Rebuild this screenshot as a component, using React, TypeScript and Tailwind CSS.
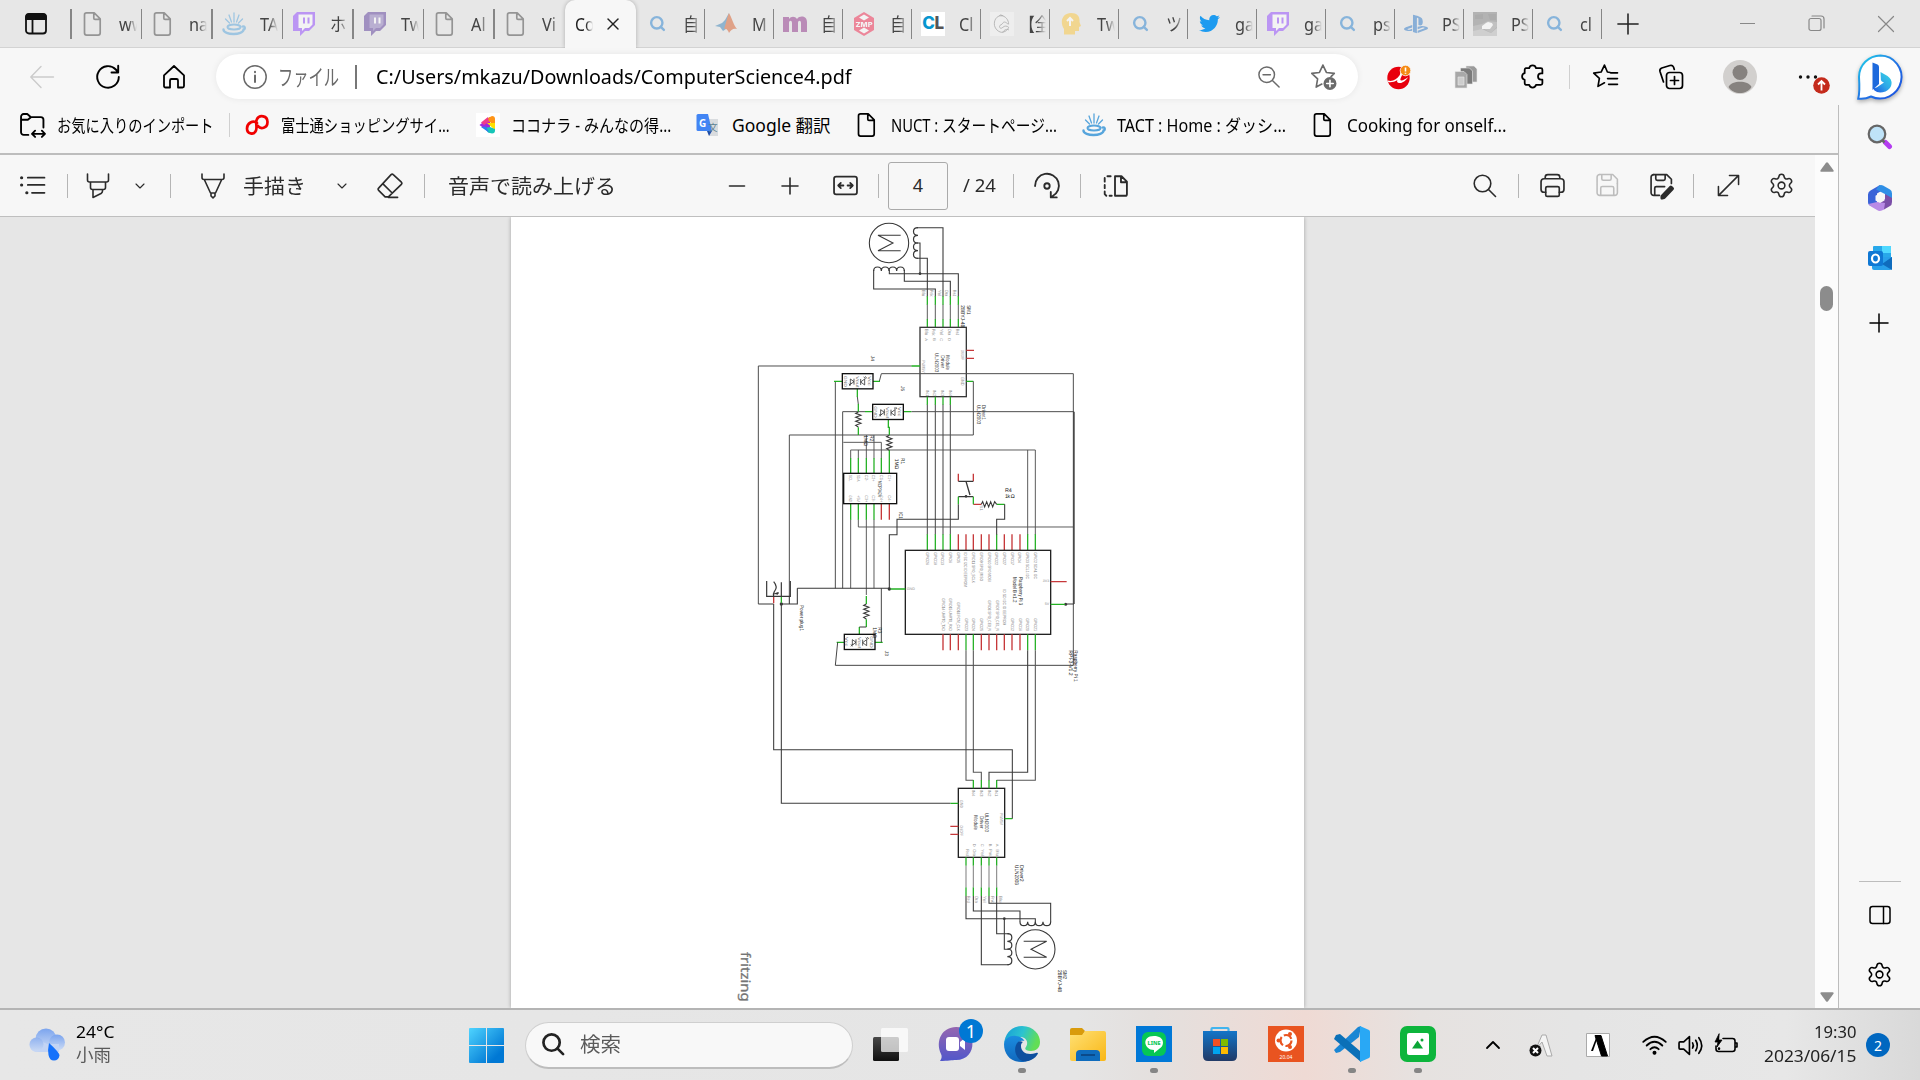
import React, { useLayoutEffect, useRef, useState } from "react";
import { Search, Settings, X, ChevronDown, ChevronUp } from "lucide-react";
import { FaTwitter, FaPlaystation } from "react-icons/fa";

const FONT = "font-['Noto_Sans','Noto_Sans_CJK_JP',sans-serif]";

/* Text squeezed or stretched to a given width. */
function Fit({ w, className = "", children }: { w: number; className?: string; children: string }) {
  const ref = useRef<HTMLSpanElement>(null);
  const [s, setS] = useState(1);
  useLayoutEffect(() => {
    const measure = () => {
      if (ref.current && ref.current.offsetWidth) setS(w / ref.current.offsetWidth);
    };
    measure();
    document.fonts?.ready.then(measure);
  }, [w]);
  return (
    <span className={`block shrink-0 whitespace-nowrap ${className}`} style={{ width: w }}>
      <span ref={ref} className="inline-block origin-left" style={{ transform: `scaleX(${s})` }}>
        {children}
      </span>
    </span>
  );
}

type P = { className?: string; children?: React.ReactNode; vb?: string; sw?: number };
const Ico = ({ className = "", children, vb = "0 0 24 24", sw = 1.5 }: P) => (
  <svg viewBox={vb} className={`block shrink-0 overflow-visible ${className}`} fill="none" stroke="currentColor" strokeWidth={sw} strokeLinecap="round" strokeLinejoin="round">
    {children}
  </svg>
);

const Doc = ({ className = "size-6" }: P) => (
  <Ico className={className} sw={1.7}>
    <path d="M5.500 .9h7.700l6 6v14.200a2 2 0 0 1-2 2H5.500a2 2 0 0 1-2-2V2.900a2 2 0 0 1 2-2zM12.800 1v5.200a1.200 1.200 0 0 0 1.200 1.200h5" />
  </Ico>
);
const Java = ({ className = "size-6" }: P) => (
  <Ico className={className} sw={1.3}>
    <g stroke="#57a5dc">
      <path d="M12 10V1M9.500 10L7 3M14.500 10L17 3M7.500 11L3.500 7M16.500 11L20.500 7" />
      <ellipse cx="12" cy="15" rx="6.500" ry="2.500" strokeWidth="2" />
      <path d="M1.500 17.500c0 6 20 6 20 0c2 0 1.500-4-1-3" strokeWidth="2.400" />
    </g>
  </Ico>
);
const Twitch = ({ c }: { c: string }) => (
  <svg viewBox="0 0 24 24" className="size-6">
    <path d="M5 0h18v13l-6 6h-4l-5 5v-5H1V4z" fill={c} />
    <path d="M6.500 2.500h14v10l-3.500 3.500h-4l-3 3v-3h-3.500z" fill={c === "#5b3b9b" ? "#8d78bd" : "#fff"} />
    <path d="M11 5.500h2v6h-2zM15.500 5.500h2v6h-2z" fill={c === "#5b3b9b" ? "#fff" : c} />
  </svg>
);
const Lens = () => <Search className="size-[17px] text-[#2a83d0]" strokeWidth={3.4} />;

const favicon: Record<string, React.ReactNode> = {
  doc: <Doc className="size-6 text-[#444]" />,
  java: <Java />,
  twitch: <Twitch c="#9146ff" />,
  twitch2: <Twitch c="#5b3b9b" />,
  search: <Lens />,
  matlab: (
    <svg viewBox="0 0 24 24" className="size-6">
      <path d="M1 14l7-3 3-3 4-7v14l-6 4-3-4z" fill="#3a83b8" />
      <path d="M15 1c2 3 5 13 8 16-4-1-6 1-8 4-1-3-3-5-5-4 2-5 3-12 5-16z" fill="#d95d2a" />
    </svg>
  ),
  moodle: (
    <svg viewBox="0 0 24 24" className="size-6">
      <path d="M0 5h6v2c2-3 6-3 8 0 3-4 10-3 10 3v10h-6V11c0-3-3-3-3 0v9H9v-9c0-3-3-3-3 0v9H0z" fill="#8e3289" />
    </svg>
  ),
  zmp: (
    <svg viewBox="0 0 24 24" className="size-6">
      <path d="M12 0l10 6v12l-10 6-10-6V6z" fill="#f1284e" />
      <path d="M12 2.500l5 3-5 3-5-3zM12 21.500l5-3-5-3-5 3z" fill="#fff" />
      <text x="3.500" y="14.500" fontSize="6.500" fontWeight="800" fill="#fff" fontFamily="Inter" textLength="17" lengthAdjust="spacingAndGlyphs">ZMP</text>
    </svg>
  ),
  cl: (
    <span className="flex size-6 items-center justify-center bg-white font-['Inter',sans-serif] text-[17px] font-extrabold tracking-tight text-[#0796cf]">
      C<span className="text-[#555]">L</span>
    </span>
  ),
  bird: (
    <span className="flex size-6 items-center justify-center bg-[#f6f6f6]">
      <Ico className="size-5 text-[#777]" sw={1}>
        <path d="M11 2c5 0 9 5 9 10M11 2C5 2 2 8 3 14c1 4 4 7 8 8 5 0 8-3 9-6-2-2-5-2-7 0s-4 1-4-1 3-2 4-4 3-2 6 1M9 2l1-1 3 1M13 22c2-4 5-4 7-3" />
      </Ico>
    </span>
  ),
  bulb: (
    <svg viewBox="0 0 24 24" className="size-6">
      <path d="M5 22v-5C0 9 4 1 12 1c7 0 9 4 8.500 9l1.500 4-2 1v4h-4v3.500H5z" fill="#fcc63c" />
      <path d="M11 14V6M8 9l3-3 3 3" stroke="#fff" strokeWidth="2" fill="none" />
    </svg>
  ),
  twitter: <FaTwitter className="size-[21px] text-[#1d9bf0]" />,
  ps: <FaPlaystation className="size-6 text-[#2d78c8]" />,
  pic: (
    <svg viewBox="0 0 24 24" className="size-6">
      <path d="M0 0h24v24H0z" fill="#808080" />
      <path d="M0 14l9-2 6-3 9 1v5l-6 6-7-4-11 5z" fill="#9c9c9c" />
      <path d="M0 19l9-2 9 4 6-5v8H0z" fill="#b8b8b8" />
      <path d="M2 3l8-1v5H2zM15 2h8v6h-6z" fill="#727272" />
      <path d="M9 14l4-3 2-1 4 1 1 2-3 4H9z" fill="#fff" />
    </svg>
  ),
};

const before: [string, string][] = [["doc", "ww"], ["doc", "na"], ["java", "TA"], ["twitch", "ホ"], ["twitch2", "Tw"], ["doc", "Al"], ["doc", "Vi"]];
const after: [string, string][] = [
  ["search", "自"], ["matlab", "M"], ["moodle", "自"], ["zmp", "自"], ["cl", "Cl"], ["bird", "【全"], ["bulb", "Tw"],
  ["search", "ツ"], ["twitter", "ga"], ["twitch", "ga"], ["search", "ps"], ["ps", "PS"], ["pic", "PS"], ["search", "cl"],
];

function Tab({ icon, text, sep = true, w }: { icon: string; text: string; sep?: boolean; w: string }) {
  const vivid = icon === "cl" || icon === "twitter";
  const bracket = text.startsWith("【");
  return (
    <div className={`flex h-[47px] shrink-0 items-center ${w}`}>
      <div className={`ml-[9px] flex w-6 shrink-0 items-center justify-center ${vivid ? "" : "opacity-50"}`}>{favicon[icon]}</div>
      <div className="ml-[14px] w-[18px] shrink-0 whitespace-nowrap [mask-image:linear-gradient(90deg,#000_50%,transparent)]">
        <span className={`inline-block origin-left text-[18.500px] text-[#444] ${bracket ? "-ml-[8px] scale-x-[.8]" : "scale-x-[.88]"}`}>{text}</span>
      </div>
      <div className={`ml-auto h-[30px] w-[1.500px] ${sep ? "bg-[#868686]" : ""}`} />
    </div>
  );
}

const Gear = ({ className = "size-[27px]" }: P) => <Settings className={className} strokeWidth={1.4} />;

/* ---------- schematic ---------- */
const K = "#383838", G = "#22b022", R = "#c6383a", N = "#858585";
const Ln = ({ d, c = K, w = 3.2 }: { d: string; c?: string; w?: number }) => <path d={d} stroke={c} strokeWidth={w} />;
const pins = (xs: number[], a: number, b: number) => xs.map((x) => `M${x} ${a}V${b}`).join("");
const T = ({ x, y, s = 15, l, c = "#8f8f8f", children }: { x: number; y: number; s?: number; l?: number; c?: string; children: string }) => (
  <text transform={`translate(${x} ${y}) rotate(90)`} fontSize={s + 1} fill={c} textLength={l} lengthAdjust="spacingAndGlyphs">
    {children}
  </text>
);
const resV = (x: number, y: number) => `M${x} ${y}l-8 4l16 6l-16 6l16 6l-16 6l16 6l-16 6l8 5`;
const Sensor = ({ x, y, flip = false }: { x: number; y: number; flip?: boolean }) => (
  <g transform={`translate(${x} ${y})`}>
    <rect width="92" height="45.500" stroke="#111" strokeWidth="4" />
    <T x={flip ? 76 : 4} y={6} s={12} l={34} c="#777">GND</T>
    <T x={flip ? 3 : 76} y={8} s={12} l={28} c="#777">Vcc</T>
    <T x={40} y={8} s={12} l={34} c="#777">Vout</T>
    <path d="M35 15v18M35 24L24 16v16zM20 36l7-7M20 30l4 6M55 16v18M55 25l12-9v18zM64 10l6 5M69 8l4 6" stroke="#333" strokeWidth="2.400" />
  </g>
);

function Schematic() {
  return (
    <svg viewBox="511 217 793 791" className="h-[791px] w-[793px]" fill="none" fontFamily="'Liberation Sans', sans-serif" textRendering="geometricPrecision">
      <g transform="translate(740 215) scale(.33333)">
        {/* upper motor */}
        <circle cx="447" cy="84" r="59" stroke={K} strokeWidth="3.200" />
        <Ln d="M482 61H414L459 84L414 107H482" />
        <Ln d="M534 38c-18 0-18 23 0 23c-18 0-18 23 0 23c-18 0-18 23 0 23c-18 0-18 23 0 23" w={3.6} />
        <Ln d="M401 168c0-16 23-16 23 0c0-16 23-16 23 0c0-16 23-16 23 0c0-16 23-16 23 0" w={3.6} />
        <Ln d="M530 38H609V245M532 130H562V245M530 84H540V176M448 165V176H655V245M493 165V199H631V245M401 165V222H586V245" />
        <circle cx="540" cy="176" r="4" fill={K} />
        <Ln d={pins([562, 586, 609, 631, 655], 268, 313)} c="#666" />
        <Ln d={pins([562, 586, 609, 631, 655], 244, 269) + pins([562, 586, 609, 631, 655], 312, 336)} c={G} w={3.8} />
        {["Blu", "Pnk", "Yel", "Ora", "Red"].map((t, i) => (
          <g key={t}>
            <T x={546 + i * 23.5} y={224} s={13} l={20}>{t}</T>
            <T x={554 + i * 23.5} y={341} s={13} l={20}>{t}</T>
            {i < 4 && <T x={555 + i * 23} y={370} s={11}>{"ABCD"[i]}</T>}
          </g>
        ))}
        <T x={680} y={271} l={27} c="#222">SM1</T>
        <T x={664} y={271} l={66} c="#222">28BYJ-48</T>
        <rect x="540" y="337" width="139" height="208" stroke={K} strokeWidth="4" />
        <T x={619} y={421} l={44} c="#333">Module</T>
        <T x={603} y={421} l={38} c="#333">Driver</T>
        <T x={586} y={414} l={58} c="#333">ULN2003</T>
        <T x={545} y={436} s={12} l={36}>PWM5V</T>
        <T x={663} y={404} s={12} l={32}>ON/OFF</T>
        <T x={663} y={486} s={13} l={26}>GND</T>
        {[0, 1, 2, 3].map((i) => <T key={i} x={557 + i * 23} y={524} s={12}>{`IN${i + 1}`}</T>)}
        <Ln d="M679 406H702M679 430H702" c={R} w={4} />
        <Ln d="M514 453H540M679 499H700" c={G} w={3.8} />
        <T x={392} y={422} s={14} c="#444">J4</T>
        <T x={484} y={513} s={14} c="#444">J5</T>

        <g transform="translate(0 435)">
          <Ln d="M514 18H55V732M418 64L424 41H1000V916M352 110L355 133M700 64V225H148V710M286 64V685M375 155H308V685M514 155H1002" c="#4c4c4c" w={3} />
          <Ln d="M1002 155V732" w={4} />
          <Ln d={"M310 247H424V295M402 225V295M379 225V295M332 295V270H886V525M355 270V295M863 270V525M332 478V685M355 478V501H1000M379 478V705M402 478V685"} c="#505050" w={2.8} />
          <Ln d={pins([562, 586, 609, 631], 133, 524)} c="#505050" />
          <Ln d={pins([562, 586, 609, 631], 110, 134) + pins([562, 586, 609, 631, 770, 863, 886], 523, 571) + "M282 64H307M399 64H420M352 86V111M355 132V155M355 202V225M375 155H398M491 155H514M445 179V202H448V225M448 270V340" + pins([332, 355, 379, 402, 424], 294, 340) + pins([332, 355, 379, 402], 431, 479)} c={G} w={3.8} />
          <Ln d={pins([424, 448], 431, 479) + pins([655, 678, 700, 724, 747, 793, 816, 840], 523, 571) + "M655 341V364M700 341V364M700 433H724"} c={R} w={4} />
          <Sensor x={307} y={41} />
          <Sensor x={398} y={133} />
          <Ln d={resV(355, 156) + resV(448, 226)} />
          <rect x="311" y="340" width="159" height="91" stroke="#111" strokeWidth="4" />
          <T x={413} y={362} s={15} l={48} c="#333">MCP3424</T>
          {["SCL", "SDA", "C2-", "C2+", "C1-", "C1+"].map((t, i) => <T key={t} x={328 + i * 23} y={344} s={12} l={20}>{t}</T>)}
          {["GND", "+5V", "C3+", "C3-", "C4+", "C4-"].map((t, i) => <T key={t} x={328 + i * 23} y={406} s={12} l={20}>{t}</T>)}
          <T x={391} y={226} l={18} c="#222">R2</T>
          <T x={373} y={226} l={32} c="#222">1MΩ</T>
          <T x={483} y={294} l={18} c="#222">R1</T>
          <T x={466} y={296} l={32} c="#222">1MΩ</T>
          <T x={478} y={456} l={20} c="#333">IC1</T>
          <T x={727} y={135} l={44} c="#333">Driver1</T>
          <T x={710} y={135} l={58} c="#222">ULN2003</T>
          <Ln d="M655 364H700M678 364L690 405M655 410H700" w={4} />
          <Ln d="M655 410V433M700 410V433M770 433H794" c={G} w={3.8} />
          <circle cx="678" cy="409" r="4" fill={K} />
          <Ln d="M724 433l4-8l6 16l6-16l6 16l6-16l6 16l6-16l6 8" />
          <Ln d="M794 433V478H770V524M655 433V478H471V524H448V685" />
          <T x={721} y={436} s={12}>S1</T>
          <text x="795" y="397" fontSize="16" fill="#222">R4</text>
          <text x="795" y="413" fontSize="16" fill="#222" textLength="29">1k Ω</text>
        </g>

        <g transform="translate(0 945)">
          <rect x="496" y="61" width="436" height="252" stroke="#222" strokeWidth="4" />
          {["GPIO26", "GPIO19", "GPIO13", "GPIO6", "GPIO5", "ID SC I2C ID EEPROM", "GPIO11 SPI0_SCLK", "GPIO9 SPI0_MISO", "GPIO10 SPI0 MOSI", "GPIO22", "GPIO27", "GPIO17", "GPIO4", "GPIO3 SCL1 I2C", "GPIO2 SDA1 I2C"].map((t, i) => (
            <T key={t} x={558 + i * 23.1} y={67} s={12} l={[38, 38, 38, 32, 32, 104, 92, 86, 88, 38, 38, 38, 32, 80, 80][i]} c="#7c7c7c">{t}</T>
          ))}
          {([["GPIO14 UART0_TXD", 98], ["GPIO15 UART0_RXD", 98], ["GPIO18 PCM_CLK", 86], ["GPIO23", 38], ["GPIO24", 38], ["GPIO25", 38], ["GPIO8 SPI0_CE0_N", 92], ["GPIO7 SPI0_CE1_N", 92], ["", 0], ["GPIO12", 38], ["GPIO16", 38], ["GPIO20", 38], ["GPIO21", 38]] as [string, number][]).map(([t, l], i) =>
            t ? <T key={i} x={605 + i * 23.1} y={303 - l} s={12} l={l} c="#7c7c7c">{t}</T> : <T key={i} x={790} y={178} s={12} l={108} c="#7c7c7c">ID SD I2C ID EEPROM</T>
          )}
          <T x={838} y={141} l={84} c="#222">Raspberry Pi 3</T>
          <T x={818} y={141} l={76} c="#222">Model B v1.2</T>
          <text x="500" y="181" fontSize="11" fill="#888">GND</text>
          <text x="908" y="157" fontSize="11" fill="#888">3V3</text>
          <text x="914" y="225" fontSize="11" fill="#888">5V</text>
          <Ln d="M172 175H447M980 222H1002M55 222H101M124 222H172V175M148 199V222" />
          <circle cx="448" cy="177" r="5" fill={K} />
          <circle cx="977" cy="223" r="4.500" fill={K} />
          <circle cx="124" cy="222" r="5" fill={K} />
          <Ln d={"M452 177H496M932 223H975M124 199V218" + pins([678, 700, 863, 886], 313, 361) + "M379 198V222M379 268V291M358 291V313M290 337H313M405 337H428"} c={G} w={3.8} />
          <Ln d={"M932 155H980M101 199V220" + pins([609, 631, 655, 724, 747, 770, 793, 816, 840], 313, 361)} c={R} w={4} />
          <Ln d="M80 153V199H151V153M124 157V199M101 155q14 16 2 30q-4 6-2 14M103 192l12-4M110 194l6-6" w={3.6} />
          <Ln d={resV(379, 222) + "M379 291H358"} />
          <Sensor x={313} y={313} flip />
          <Ln d="M424 175V337M293 337L286 406H1000" w={2.8} />
          <T x={415} y={292} l={18} c="#222">R3</T>
          <T x={398} y={292} l={32} c="#222">1MΩ</T>
          <T x={436} y={362} s={14} c="#444">J3</T>
          <T x={180} y={225} l={78} c="#222">Power plug1</T>
          <T x={1003} y={361} l={94} c="#222">Raspberry Pi 1</T>
          <T x={986} y={361} l={76} c="#222">RPI-3-V1.2</T>
          <Ln d="M678 361V751H700M700 361V727H724V751M886 361V751H770" c="#555" />
          <Ln d="M863 361V727H747V751M101 222V659H817V866M124 222V820H631" c="#3c3c3c" />
        </g>

        <g transform="translate(0 1515)">
          <rect x="655" y="205" width="139" height="207" stroke="#222" strokeWidth="4" />
          <Ln d={pins([700, 724, 747, 770], 180, 205) + pins([678, 700, 724, 747, 770], 412, 437) + pins([678, 700, 724, 747, 770], 502, 528) + "M794 296H817M631 250H655"} c={G} w={3.8} />
          <Ln d="M631 319H655M631 343H655" c={R} w={4} />
          <Ln d={pins([678, 700, 724, 747, 770], 437, 502)} c={N} />
          {["IN4", "IN3", "IN2", "IN1"].map((t, i) => <T key={t} x={697 + i * 23} y={209} s={12}>{t}</T>)}
          {["Red", "Ora", "Yel", "Pnk", "Blu"].map((t, i) => (
            <g key={t}>
              <T x={677 + i * 23} y={388} s={12} l={20}>{t}</T>
              <T x={680 + i * 24} y={528} s={13} l={20}>{t}</T>
              {i > 0 && <T x={677 + i * 23} y={371} s={11}>{"DCBA"[i - 1]}</T>}
            </g>
          ))}
          <T x={660} y={240} s={12} l={24}>GND</T>
          <T x={660} y={316} s={12} l={32}>ON/OFF</T>
          <T x={779} y={279} s={12} l={36}>PWM5V</T>
          <T x={736} y={279} l={57} c="#333">ULN2003</T>
          <T x={719} y={288} l={38} c="#333">Driver</T>
          <T x={702} y={286} l={44} c="#333">Module</T>
          <T x={841} y={435} l={50} c="#222">Driver2</T>
          <T x={825} y={435} l={60} c="#222">ULN2003</T>
          <Ln d="M678 528V596H886V608M700 528V573H840V606M724 528V734H807M747 528V550H932V606M770 528V641H807M793 596V688H807" />
          <circle cx="793" cy="596" r="4" fill={K} />
          <Ln d="M840 605c0 16 23 16 23 0c0 16 23 16 23 0c0 16 23 16 23 0c0 16 23 16 23 0" w={3.6} />
          <Ln d="M802 641c18 0 18 23 0 23c18 0 18 23 0 23c18 0 18 23 0 23c18 0 18 24 0 24" w={3.6} />
          <circle cx="886" cy="688" r="59" stroke={K} strokeWidth="3.200" />
          <Ln d="M851 664H920L873 688L920 712H851" />
          <T x={970} y={750} l={27} c="#111">SM2</T>
          <T x={954} y={750} l={66} c="#111">28BYJ-48</T>
          <text transform="translate(2 696) rotate(90)" fontFamily="'Noto Sans', sans-serif" fontSize="39" fill="#757575" stroke="#757575" strokeWidth=".9" textLength="149" lengthAdjust="spacingAndGlyphs">fritzing</text>
        </g>
      </g>
    </svg>
  );
}

/* ---------- taskbar icons ---------- */
const TaskIcon = ({ children, dot = false }: { children: React.ReactNode; dot?: boolean }) => (
  <div className="flex h-[70px] w-[66px] shrink-0 flex-col items-center pt-4">
    <svg viewBox="0 0 36 36" className="size-9 overflow-visible">{children}</svg>
    <div className={`mt-[6px] h-[5px] w-2 rounded-full ${dot ? "bg-[#858585]" : ""}`} />
  </div>
);

const Sep = ({ className = "bg-[#b5b5b5]" }: P) => <div className={`h-6 w-px shrink-0 ${className}`} />;
const Floppy = "M4.500 1.500H17L21.500 6v4M6.500 1.500v4q0 1.500 1.500 1.500h6q1.500 0 1.500-1.500v-4";

export default function App() {
  return (
    <div className={`flex h-[1080px] w-[1920px] flex-col overflow-hidden bg-[#f7f7f7] text-black ${FONT}`}>
      <svg className="absolute size-0">
        <defs>
          <linearGradient id="win" gradientUnits="userSpaceOnUse" x1="0" y1="0" x2="35" y2="35"><stop stopColor="#4fd4ff" /><stop offset=".8" stopColor="#0078d4" /></linearGradient>
          <linearGradient id="bing" x1="0" y1="0" x2="1" y2="1"><stop stopColor="#1fd5ea" /><stop offset=".5" stopColor="#2376e5" /><stop offset="1" stopColor="#1b4ee0" /></linearGradient>
          <linearGradient id="bingB" x1="1" y1="0" x2="0" y2="1"><stop stopColor="#35d6e4" /><stop offset=".5" stopColor="#2fa8e8" /><stop offset="1" stopColor="#1b4ee0" /></linearGradient>
          <linearGradient id="edgeA" x1="0" y1="0" x2="1" y2=".3"><stop stopColor="#159bd8" /><stop offset=".55" stopColor="#2cc3d0" /><stop offset="1" stopColor="#62de55" /></linearGradient>
          <linearGradient id="edgeB" x1="0" y1="0" x2="0" y2="1"><stop stopColor="#1b8de0" /><stop offset="1" stopColor="#1068bd" /></linearGradient>
          <linearGradient id="cloud" x1="0" y1="0" x2="0" y2="1"><stop stopColor="#7ba4ee" /><stop offset="1" stopColor="#cddcf5" /></linearGradient>
          <linearGradient id="store" x1="0" y1="0" x2="0" y2="1"><stop stopColor="#1375c8" /><stop offset="1" stopColor="#223a66" /></linearGradient>
          <linearGradient id="folder" x1="0" y1="0" x2="1" y2="1"><stop stopColor="#ffe074" /><stop offset="1" stopColor="#f9b716" /></linearGradient>
          <linearGradient id="chat" x1="0" y1="0" x2="0" y2="1"><stop stopColor="#9566b0" /><stop offset="1" stopColor="#5157ca" /></linearGradient>
          <linearGradient id="tv" x1="0" y1="0" x2="0" y2="1"><stop stopColor="#484848" /><stop offset="1" stopColor="#101010" /></linearGradient>
        </defs>
      </svg>

      {/* tab strip */}
      <div className="flex h-12 shrink-0 border-b border-[#d3d3d3] bg-[#e7e7e7]">
        <div className="flex h-[47px] w-[70px] shrink-0 items-center pl-[25px]">
          <svg viewBox="0 0 22 22" className="size-[22px]" fill="none" stroke="#111" strokeWidth="1.800">
            <rect x="1" y="1.500" width="20" height="19" rx="3" />
            <path d="M1 4q0-3 3-3h14q3 0 3 3v2H1z" fill="#111" /><path d="M7.500 6v14" />
          </svg>
        </div>
        <div className="my-auto h-[30px] w-[1.500px] shrink-0 bg-[#868686]" />
        {before.map(([i, t], k) => <Tab key={k} icon={i} text={t} sep={k < 6} w="w-[70.500px]" />)}
        <div className="flex h-12 w-[71px] shrink-0 items-center rounded-t-[10px] bg-[#f7f7f7] shadow-[0_0_4px_rgba(0,0,0,.25)] [clip-path:inset(-4px_-4px_0_-4px)]">
          <div className="ml-[10px] w-[18px] whitespace-nowrap [mask-image:linear-gradient(90deg,#000_60%,transparent)]">
            <span className="inline-block origin-left scale-x-[.85] text-[18.500px] text-[#222]">Co</span>
          </div>
          <X className="ml-[10px] size-5 text-[#222]" strokeWidth={1.7} />
        </div>
        {after.map(([i, t], k) => <Tab key={k} icon={i} text={t} w="w-[69px]" />)}
        <div className="flex h-[47px] flex-1 items-center text-[#222]">
          <Ico className="ml-[15px] size-[22px]" sw={1.7}><path d="M12 1v22M1 12h22" /></Ico>
          <div className="ml-[101px] h-px w-[15px] bg-[#888]" />
          <Ico className="ml-[53px] size-[17px] text-[#888]" vb="0 0 17 17" sw={1.2}><rect x="1" y="3.500" width="12" height="12" rx="2" /><path d="M4 1h9q3 0 3 3v9" /></Ico>
          <Ico className="ml-[53px] size-4 text-[#888]" vb="0 0 16 16" sw={1.2}><path d="M.5.5l15 15M15.500.5l-15 15" /></Ico>
        </div>
      </div>

      {/* address bar */}
      <div className="flex h-[57px] shrink-0 items-center">
        <div className="flex w-[84px] justify-center"><Ico className="size-6 text-[#cbcbcb]" sw={1.4}><path d="M23.500 12H1M11 1.500L.8 12L11 22.500" /></Ico></div>
        <div className="flex w-12 justify-center"><Ico className="size-6" sw={1.9}><path d="M22.800 12A10.800 10.800 0 1 1 19.800 4.500L22 7M22.200 .8V7.500H15.500" /></Ico></div>
        <div className="flex w-[84px] justify-center"><Ico className="size-6" sw={1.8}><path d="M2 10.300L12 1l10 9.300V21a1.500 1.500 0 0 1-1.500 1.500H16V15.500a1.500 1.500 0 0 0-1.500-1.500h-5A1.500 1.500 0 0 0 8 15.500v7H3.500A1.500 1.500 0 0 1 2 21z" /></Ico></div>
        <div className="flex h-[45px] w-[1142px] shrink-0 items-center rounded-full bg-white pl-[27px] pr-[21px] text-[20.500px] shadow-[0_0_7px_rgba(0,0,0,.07)]">
          <Ico className="size-6 text-[#6a6a6a]" sw={1.5}><circle cx="12" cy="12" r="11.200" /><path d="M12 10.500v6.500M12 6.800v.4" strokeWidth="2" /></Ico>
          <Fit w={61} className="ml-[11px] text-[22px] text-[#6a6a6a]">ファイル</Fit>
          <div className="ml-[16px] h-6 w-[1.500px] bg-[#777]" />
          <Fit w={476} className="ml-[19px]">C:/Users/mkazu/Downloads/ComputerScience4.pdf</Fit>
          <Ico className="ml-auto size-[22px] text-[#6a6a6a]" sw={1.6}><circle cx="9.500" cy="9.500" r="8.500" /><path d="M16 16l7 7M5.500 9.500h8" /></Ico>
          <Ico className="ml-[31px] size-[26px] text-[#6a6a6a]" sw={1.5}>
            <path d="M11 1l3.200 6.800 7.300.9-3 3M11 1L7.800 7.800.7 8.700l5.400 5-1.300 7.600L10 18.500" />
            <circle cx="17.500" cy="18" r="6" fill="#6a6a6a" stroke="none" /><path d="M17.500 15v6M14.500 18h6" stroke="#fff" />
          </Ico>
        </div>
        <div className="flex w-[82px] justify-center">
          <svg viewBox="0 0 24 24" className="size-6 overflow-visible">
            <circle cx="11.500" cy="13" r="11.200" fill="#e8000d" />
            <path d="M.8 15.500c4.500 1.500 9-1 12-5.500l1-4 2.500 1c-1 3-3 6-3 8 1 1.500 5.500-1 8-3-2.500 4-6.500 6.500-9.500 6-2-.5-2-2-1.300-3C7.500 17 4 17.500 1.200 17z" fill="#fff" />
            <circle cx="18.500" cy="5.500" r="5.300" fill="#f58a13" stroke="#f7f7f7" strokeWidth=".8" /><path d="M18.500 2.500v4M18.500 7.800v1" stroke="#fff" strokeWidth="1.600" />
          </svg>
        </div>
        <div className="flex w-[52px] justify-center">
          <svg viewBox="0 0 24 24" className="size-6" stroke="#e8e8e8" strokeWidth=".6">
            <path d="M12 1h8l3 3v13H12z" fill="#9a9a9a" /><path d="M6.500 3h9l3 3v13h-12z" fill="#7b7b7b" /><path d="M1 6.500h9l3 3V23H1z" fill="#a8a8a8" /><path d="M4 12h6v8H4z" fill="#cdcdcd" />
          </svg>
        </div>
        <div className="flex w-[77px] justify-center pl-1">
          <Ico className="size-[25px]" sw={1.7}><path d="M8.800 4a3.400 3.400 0 0 1 6.600 0H20a1.500 1.500 0 0 1 1.500 1.500V9h-1.200a3 3 0 0 0 0 6h1.200v3.500A1.500 1.500 0 0 1 20 20h-4.600a3.400 3.400 0 0 1-6.600 0H6a1.500 1.500 0 0 1-1.500-1.500V15.200a3.300 3.300 0 0 1 0-6.400V5.500A1.500 1.500 0 0 1 6 4z" /></Ico>
        </div>
        <Sep className="bg-[#d0d0d0]" />
        <div className="flex w-[70px] justify-center"><Ico className="size-[25px]" sw={1.6}><path d="M16.500 8.200l-2.700-.5L11 1 7.800 7.700.7 8.700l5.400 5L4.800 21.500l6.200-3.500M17 8.500h6.500M14 14h9.500M15 19.500h8.500" /></Ico></div>
        <div className="flex w-[62px] justify-center"><Ico className="size-6" sw={1.7}><rect x="7.500" y="7.500" width="16" height="16" rx="3" /><path d="M15.500 11.500v8M11.500 15.500h8M4.500 17L1 6.500Q.3 4 2.800 3L11 .5q2.500-.6 3.500 1.500l.8 2.500" /></Ico></div>
        <div className="flex w-[76px] justify-center">
          <svg viewBox="0 0 34 34" className="size-[34px]"><circle cx="17" cy="17" r="17" fill="#d2d0ce" /><circle cx="17" cy="12.500" r="7.500" fill="#86827f" /><path d="M5.500 27c3-7 20-7 23 0-5 8-18 8-23 0z" fill="#86827f" /></svg>
        </div>
        <div className="flex w-[62px] justify-center">
          <svg viewBox="0 0 32 32" className="size-8 overflow-visible"><g fill="#111"><circle cx="7.500" cy="16" r="1.700" /><circle cx="15" cy="16" r="1.700" /><circle cx="22.500" cy="16" r="1.700" /></g><circle cx="28.500" cy="24.500" r="8.300" fill="#c42b1c" /><path d="M28.500 29.500V20M25 23.500l3.500-3.500 3.500 3.500" stroke="#fff" strokeWidth="1.800" fill="none" /></svg>
        </div>
        <div className="flex w-20 justify-center">
          <svg viewBox="0 0 46 46" className="size-[46px] overflow-visible drop-shadow-[0_2px_2px_rgba(0,0,0,.3)]">
            <path d="M23.500 1.500A21.500 21.500 0 1 1 14 42.500Q8 45.500 1.200 44.700Q3 38 2 23A21.500 21.500 0 0 1 23.500 1.500z" fill="#fff" stroke="url(#bing)" strokeWidth="2" />
            <path d="M15.500 8.500l5 2q1.500.8 1.500 2.500v17l-6.500 6z" fill="#1d69dc" /><path d="M23.500 18l7 4q4.500 3 4 8-.5 5-6 7.500-7 2.500-11-1l-2-3c1.500 1 3 .5 4.500-.3l7-4.700-1.200-.5q-1.300-.6-1.900-2z" fill="url(#bingB)" />
          </svg>
        </div>
      </div>

      <div className="flex min-h-0 flex-1">
        <div className="flex w-[1838px] shrink-0 flex-col">
          {/* favourites */}
          <div className="flex h-12 shrink-0 items-center pb-2 pl-5 text-[17.500px]">
            <Ico className="size-[25px]" sw={1.8}><path d="M8 21H3.500A2.500 2.500 0 0 1 1 18.500V3.500A2.500 2.500 0 0 1 3.500 1H7l3.500 3H20a2.500 2.500 0 0 1 2.500 2.500V14M1 6.500h6.500L10.500 4M12 20h12M14.500 17l-3 3 3 3M21 17l3 3-3 3" /></Ico>
            <Fit w={157} className="ml-3">お気に入りのインポート</Fit>
            <Sep className="ml-[15px] bg-[#d0d0d0]" />
            <Ico className="ml-[15px] size-6 text-[#f00000]" sw={2.7}><path d="M12 10C8 7 2 10 2 15.500s7 7 9 2C12.500 14 10 9 12 6c2.500-4.500 10.500-3.500 10.500 3s-7 7.500-9.500 4" /></Ico>
            <Fit w={169} className="ml-3">富士通ショッピングサイ...</Fit>
            <svg viewBox="0 0 24 24" className="ml-[26px] size-6"><path d="M0 0h24v24H0z" fill="#fff" /><path d="M3.500 12L14 4v16z" fill="#a328dc" /><path d="M10 6l6-3q3 0 3 3v7z" fill="#ff9416" /><path d="M11 10l8 0v7z" fill="#ffe100" /><path d="M5 9.500l7-5.500 1 5-5 3z" fill="#ef3b8c" /><path d="M9 15l5-1 5 2v1.500q0 3-3 3l-4-1z" fill="#16c6b8" /><path d="M5 14l5-.5 3 6z" fill="#2b7df0" /></svg>
            <Fit w={160} className="ml-[11px]">ココナラ - みんなの得...</Fit>
            <svg viewBox="0 0 24 24" className="ml-[25px] size-6"><path d="M9 6h13v17H13z" fill="#d9dcdf" /><path d="M2 1h10l4 17H2q-1.500 0-1.500-1.500v-14Q.5 1 2 1z" fill="#4285f4" /><path d="M11 18h5l-3 5z" fill="#1f4eaa" /><text x="3" y="13.500" fontSize="10" fontWeight="700" fill="#fff">G</text><text x="12.500" y="18" fontSize="9" fill="#5c7f90">文</text></svg>
            <Fit w={99} className="ml-3">Google 翻訳</Fit>
            <Doc className="ml-6 size-6" />
            <Fit w={166} className="ml-3">NUCT : スタートページ...</Fit>
            <Java className="ml-[25px] size-6" />
            <Fit w={169} className="ml-[11px]">TACT : Home : ダッシ...</Fit>
            <Doc className="ml-[25px] size-6" />
            <Fit w={160} className="ml-3">Cooking for onself...</Fit>
          </div>
          <div className="flex min-h-0 flex-1 border-t-2 border-[#bdbdbd]">
            <div className="flex w-[1815px] shrink-0 flex-col">
              {/* document toolbar */}
              <div className="flex h-[62px] shrink-0 items-center border-b border-[#bfbfbf] pl-5 text-[20px] text-[#2b2b2b]">
                <Ico className="size-[25px]" sw={1.7}><path d="M7.500 4.500H23.500M7.500 11.500H23.500M11.500 19H23.500" /><path d="M1.500 4.500h.1M1.500 11.500h.1M6.500 19h.1" strokeWidth="3" /></Ico>
                <Sep className="ml-[22px] bg-[#b5b5b5]" />
                <Ico className="ml-[18px] size-6" sw={1.6}><path d="M1.500 0v6q0 2 2 2h17q2 0 2-2V0M4.500 8v5.500q0 2 2 2h11q2 0 2-2V8M7 15.500v8l8-4q1.500-1 1.500-2.500v-1.500" /></Ico>
                <ChevronDown className="ml-[22px] size-4" strokeWidth={1.7} />
                <Sep className="ml-[22px] bg-[#b5b5b5]" />
                <Ico className="ml-[30px] size-6" sw={1.6}><path d="M1 0v3.500Q1 5.500 3 5.500h18Q23 5.500 23 3.500V0M3.500 6l6 13h5l6-13M10 19v3l2 1.800 2-1.800v-3" /></Ico>
                <Fit w={63} className="ml-[18px] pt-[2px]">手描き</Fit>
                <ChevronDown className="ml-7 size-4" strokeWidth={1.7} />
                <Ico className="ml-[27px] size-[26px]" sw={1.5}><path d="M15 1.500l7.500 7q1 1 0 2L10.500 22h-3L1.500 16q-1-1 0-2L13 1.500q1-1 2 0zM5.500 10l8.500 8.500M10.500 22.500H19" /></Ico>
                <Sep className="ml-[21px] bg-[#b5b5b5]" />
                <Fit w={168} className="ml-[23px] pt-[2px]">音声で読み上げる</Fit>
                <Ico className="ml-[112px] size-[18px]" vb="0 0 18 18" sw={1.6}><path d="M1.500 9h15" /></Ico>
                <Ico className="ml-[35px] size-[18px]" vb="0 0 18 18" sw={1.6}><path d="M1 9h16M9 1v16" /></Ico>
                <Ico className="ml-[34px] size-[25px]" sw={1.7}><rect x="1" y="3.500" width="22" height="17" rx="2" /><path d="M5 12h5M14 12h5M7.500 9.500L5 12l2.500 2.500M16.500 9.500L19 12l-2.500 2.500" /></Ico>
                <Sep className="ml-[20px] bg-[#b5b5b5]" />
                <div className="ml-[9px] flex h-12 w-[60px] shrink-0 items-center justify-center rounded-[3px] border border-[#aaa] text-[18px]">4</div>
                <Fit w={33} className="ml-[15px] text-[18px]">/ 24</Fit>
                <Sep className="ml-[17px] bg-[#b5b5b5]" />
                <Ico className="ml-5 size-[26px]" sw={1.7}><path d="M1 12A11 11 0 1 1 17 21.500M15.500 17.500v5h5.500" /><circle cx="12" cy="12" r="2.500" /></Ico>
                <Sep className="ml-5 bg-[#b5b5b5]" />
                <Ico className="ml-[21px] size-[26px]" sw={1.7}><path d="M12 3h6l5 5v11.500q0 1.500-1.500 1.500H12zM17.500 3v5.500H23" /><path d="M8 3H5M2.500 4.500V8M2.500 11v3M2.500 17v2.500L4 21M7 21h2" /></Ico>
                <Ico className="ml-[345px] size-6" sw={1.6}><circle cx="9.500" cy="9.500" r="8.300" /><path d="M15.500 15.500l7 7" /></Ico>
                <Sep className="ml-[21px] bg-[#b5b5b5]" />
                <Ico className="ml-[21px] size-[25px]" sw={1.6}><path d="M5 5.500V4Q5 1.500 7.500 1.500h9Q19 1.500 19 4v1.500M5.500 18.500H4Q1 18.500 1 15.500V8.500Q1 5.500 4 5.500h16q3 0 3 3v7q0 3-3 3h-1.500" /><rect x="5.500" y="13" width="13" height="9.500" rx="1.500" /></Ico>
                <Ico className="ml-[30px] size-[25px] text-[#bdbdbd]" sw={1.5}><path d={Floppy} /><path d="M21.500 10v9a2.500 2.500 0 0 1-2.500 2.500H4.500A2.500 2.500 0 0 1 2 19V4a2.500 2.500 0 0 1 2.500-2.500M5.500 21v-6.500q0-1.500 1.500-1.500h9.500q1.500 0 1.500 1.500V21" /></Ico>
                <Ico className="ml-[29px] size-[25px]" sw={1.6}><path d={Floppy} /><path d="M10 21.500H4.500A2.500 2.500 0 0 1 2 19V4a2.500 2.500 0 0 1 2.500-2.500M5.500 21v-6.500q0-1.500 1.500-1.500h8" /><path d="M12.500 22.500L21 13.500l1.500 1.500-8 8.500-2 .5z" fill="currentColor" strokeWidth="3" /></Ico>
                <Sep className="ml-[19px] bg-[#b5b5b5]" />
                <Ico className="ml-[23px] size-[23px]" sw={1.6}><path d="M2 22L22 2M13 1.500h9.500V11M1.500 13v9.500H11" /></Ico>
                <Gear className="ml-7 size-[27px]" />
              </div>
              {/* page */}
              <div className="flex min-h-0 flex-1 justify-start overflow-hidden bg-[#e6e6e6] pl-[511px]">
                <div className="w-[793px] shrink-0 bg-white shadow-[0_0_4px_rgba(0,0,0,.3)]"><Schematic /></div>
              </div>
            </div>
            {/* scrollbar */}
            <div className="flex flex-1 flex-col items-center bg-[#fcfcfc] pt-[7px] pb-[6px]">
              <svg viewBox="0 0 14 10" className="h-[10px] w-[14px]"><path d="M6 .8q1-1 2 0l5.500 7.500q.5 1.500-1 1.500H1.500Q0 9.800.5 8.300z" fill="#8c8c8c" /></svg>
              <div className="mt-[114px] h-[25px] w-[13px] rounded-full bg-[#8c8c8c]" />
              <svg viewBox="0 0 14 10" className="mt-auto h-[10px] w-[14px] rotate-180"><path d="M6 .8q1-1 2 0l5.500 7.500q.5 1.500-1 1.500H1.500Q0 9.800.5 8.300z" fill="#8c8c8c" /></svg>
            </div>
          </div>
        </div>
        {/* sidebar */}
        <div className="flex flex-1 flex-col items-center border-l border-[#bdbdbd] pt-[19px] pb-5">
          <svg viewBox="0 0 26 26" className="size-[26px]"><path d="M18.500 18.500l4 4" stroke="#b43cf0" strokeWidth="5" strokeLinecap="round" /><path d="M14 15l3.500 3.500" stroke="#666" strokeWidth="2.500" /><circle cx="10" cy="10" r="8.300" fill="#bfe3f8" stroke="#666" strokeWidth="2.200" /></svg>
          <svg viewBox="0 0 26 28" className="mt-[34px] h-7 w-[26px]"><path d="M13 1L3.500 6.500Q1 8 1 10.500v7.500q0 3 3 4l6-3V9.500l6-3.500z" fill="#3a63d8" /><path d="M12 1.500q2-1 4 0l7 4q2 1.200 2 4v8.500l-7-4v-4L9 5.500z" fill="#2f8fe6" /><path d="M18 10l7 4v4q0 3-2 4l-6 3.500-7-6 8-4.500z" fill="#7b4fa8" /><path d="M1.500 20l8.500-2 8 1-1 6.500q-4 2.500-7 .5L4 22.500z" fill="#b98be6" /><path d="M13 9l4.500 2.700v4.800L13 19l-4.500-2.500v-4.800z" fill="#f7f7f7" /></svg>
          <svg viewBox="0 0 26 26" className="mt-[33px] size-[26px]"><path d="M6 2q0-1 1-1h16q1 0 1 1v11H6z" fill="#28a8ea" /><path d="M15 1h8q1 0 1 1v6h-9z" fill="#50d9ff" /><path d="M5 12h20v11q0 2-2 2H7q-2 0-2-2z" fill="#28a0ea" /><path d="M25 12L15 19l10 6z" fill="#0f6cbd" /><rect x="1" y="6" width="15" height="15" rx="2" fill="#0f78d4" /><ellipse cx="8.500" cy="13.500" rx="3.500" ry="4" fill="none" stroke="#fff" strokeWidth="2.200" /></svg>
          <Ico className="mt-[43px] mr-[2px] size-[18px]" vb="0 0 18 18" sw={1.5}><path d="M9 0v18M0 9h18" /></Ico>
          <div className="mt-auto h-px w-[42px] bg-[#bdbdbd]" />
          <Ico className="mt-[22px] size-[22px]" vb="0 0 22 22" sw={1.5}><rect x="1" y="2.500" width="20" height="17" rx="2.500" /><path d="M14.500 3v16.500" /></Ico>
          <Gear className="mt-[35px] size-[27px]" />
        </div>
      </div>

      {/* taskbar */}
      <div className="flex h-[72px] shrink-0 items-center border-t-2 border-[#b4b4b4] bg-[linear-gradient(90deg,#e7e7e7_0%,#e5e5e5_56%,#e4e0de_60%,#efdad4_68%,#e6e2e0_74%,#e5e5e5_82%,#e7e7e7_93%,#d9d9d9_100%)]">
        <svg viewBox="0 0 36 34" className="ml-[29px] h-[34px] w-9 shrink-0"><circle cx="17" cy="11" r="10.500" fill="url(#cloud)" /><circle cx="28" cy="14.500" r="8" fill="url(#cloud)" /><path d="M7 24a7 7 0 1 1 7-10l4 2h12v8z" fill="#c3d4f4" /><circle cx="7.500" cy="16.500" r="7" fill="url(#cloud)" opacity=".7" /><path d="M20 15q-1.500 7-.5 12 1 5.500 5.500 5.500t5.500-5q0-3-10.500-12.500z" fill="#1672fb" /></svg>
        <div className="ml-[11px] flex w-[61px] shrink-0 flex-col pb-1 text-[17px] leading-[23px]">
          <Fit w={38}>24°C</Fit>
          <Fit w={35} className="text-[#5a5a5a]">小雨</Fit>
        </div>
        <svg viewBox="0 0 35 35" className="ml-[332px] size-[35px] shrink-0"><path d="M0 1q0-1 1-1h16v17H0zM18 0h16q1 0 1 1v16H18zM0 18h17v17H1q-1 0-1-1zM18 18h17v16q0 1-1 1H18z" fill="url(#win)" /></svg>
        <div className="ml-[21px] flex h-[47px] w-[328px] shrink-0 items-center rounded-full border border-b-2 border-[#cfcfcf] border-b-[#bdbdbd] bg-[#f8f8f8] pl-4 text-[20px] text-[#5a5a5a]">
          <Ico className="size-[23px] text-[#222]" sw={2.8}><circle cx="10" cy="10" r="8.500" /><path d="M16 16l6 6" /></Ico>
          <Fit w={41} className="ml-[15px]">検索</Fit>
        </div>
        <div className="ml-1 flex shrink-0">
          <TaskIcon><rect x="1" y="11" width="26" height="24" rx="1.500" fill="url(#tv)" /><rect x="9" y="2" width="27" height="24" rx="1.500" fill="#fff" opacity=".72" /></TaskIcon>
          <TaskIcon><path d="M18 1c21 0 23 33 0 33-4 0-8 1-16 1 2-3 2-5 1-7C-3 15 4 1 18 1z" fill="url(#chat)" /><rect x="8" y="11" width="13" height="14" rx="3" fill="#fff" /><path d="M22 16l5-4v12l-5-4z" fill="#fff" /><circle cx="33" cy="5" r="12" fill="#0078d4" /><text x="33" y="11.500" fontSize="18" textAnchor="middle" fill="#fff">1</text></TaskIcon>
          <TaskIcon dot><path d="M0 18C1 7 8 0 18 0c12 0 18 9 18 16 0 6-4 9-9 9-5 0-7-2-5-4 3-5 0-10-6-10C8 11 2 13 0 18z" fill="url(#edgeA)" /><path d="M0 18C1 12 7 9 12 10c4 .5 7 2 8.500 5-5-1-8 2-7.500 7 .8 7 9 12 18 7-3 5-8 7-14 7C7 36 0 29 0 18z" fill="url(#edgeB)" /><path d="M14 16c-4 4-4 12 1 17 3 3 8 3 12 1 3-1.500 6-4 7-6.500 0-1-1-1-2-.5-9 3-15-1-15-7 0-2 .5-3 2-4-2-1-4-.8-5 0z" fill="#0d4f9f" /></TaskIcon>
          <TaskIcon><path d="M0 4q0-2 2-2h10l3 3-2 4H0z" fill="#d99b0c" /><path d="M0 9h12l3-4h19q2 0 2 2v26q0 2-2 2H2q-2 0-2-2z" fill="url(#folder)" /><path d="M6 35v-7q0-4 4-4h16q4 0 4 4v7z" fill="#0f6cbd" /><path d="M11 29h14" stroke="#0b4a8a" strokeWidth="2" /></TaskIcon>
          <TaskIcon dot><path d="M0 0h36v36H0z" fill="#0078d7" /><rect x="6" y="6" width="24" height="24" rx="6" fill="#06c755" /><path d="M18 10c11 0 11 10 5 13l-5 4v-3c-10 0-13-14 0-14z" fill="#fff" /><text x="18" y="19" fontSize="5.500" fontWeight="800" textAnchor="middle" fill="#06c755">LINE</text></TaskIcon>
          <TaskIcon><path d="M9.500 7V3q0-1 1-1h15q1 0 1 1v4" fill="none" stroke="#42b4ee" strokeWidth="2.200" /><path d="M1 5h34v25q0 5-5 5H6q-5 0-5-5z" fill="url(#store)" /><path d="M11 13h7v7h-7z" fill="#f25022" /><path d="M19 13h7v7h-7z" fill="#7fba00" /><path d="M11 21h7v7h-7z" fill="#00a4ef" /><path d="M19 21h7v7h-7z" fill="#ffb900" /></TaskIcon>
          <TaskIcon><path d="M0 0h36v36H0z" fill="#e95420" /><circle cx="18" cy="14.500" r="11" fill="#fff" /><circle cx="18" cy="14.500" r="5.500" fill="none" stroke="#e95420" strokeWidth="2.200" strokeDasharray="9 2.500" /><g fill="#e95420"><circle cx="10.500" cy="14.500" r="2" /><circle cx="22" cy="8" r="2" /><circle cx="22" cy="21" r="2" /></g><text x="18" y="33" fontSize="5" textAnchor="middle" fill="#fff">20.04</text></TaskIcon>
          <TaskIcon dot><path d="M27 0l-2 11L6 26l-4 1-2-3 24-23z" fill="#1a86d4" /><path d="M2 9l4-1 20 17 1 11L0 13z" fill="#0b70b8" /><path d="M26 0l9 4q1 .5 1 2v24q0 1.500-1 2l-9 4z" fill="#29a8f5" /></TaskIcon>
          <TaskIcon dot><rect width="36" height="36" rx="7" fill="#0db53c" /><rect x="7" y="7" width="22" height="22" rx="2" fill="#fff" /><path d="M12 22.500l5.500-8 5.500 8z" fill="#0ba536" /><circle cx="22" cy="14" r="1.500" fill="#0ba536" /></TaskIcon>
        </div>
        <ChevronUp className="ml-[30px] size-[24px] shrink-0" strokeWidth={1.8} />
        <svg viewBox="0 0 24 24" className="ml-6 size-6 shrink-0"><path d="M7 16L13 2h4l6 21h-5L13 9z" fill="#f4f4f4" stroke="#aaa" strokeWidth="1" /><circle cx="6.500" cy="17.500" r="6" fill="#111" /><path d="M4 15l5 5M9 15l-5 5" stroke="#fff" strokeWidth="2" /></svg>
        <svg viewBox="0 0 24 24" className="ml-[33px] size-6 shrink-0"><path d="M.5.5h23v23H.5z" fill="#fff" stroke="#aaa" /><path d="M5 18L10 5h1.500L7 18z" fill="#000" /><path d="M9 2.500h6L21.500 23h-6z" fill="#000" stroke="#000" /></svg>
        <Ico className="ml-[32px] size-[25px]" sw={1.8}><path d="M1.200 8.500q10.800-10 21.600 0M4.500 12q7.500-7 15 0M8 15.500q4-3.500 8 0" /><circle cx="12" cy="19" r="1.500" fill="currentColor" stroke="none" /><circle cx="12" cy="19" r="1" /></Ico>
        <Ico className="ml-[11px] size-[25px]" sw={1.6}><path d="M1 9.500q0-1 1-1h3.500L11 3.500v17L5.500 15.500H2q-1 0-1-1zM14 9.500q1.500 2.500 0 5M17 7q3 5 0 10M20 4.500q5.500 7.500 0 15" /></Ico>
        <Ico className="ml-[11px] size-6" sw={1.6}><path d="M9 5.500H18.500Q21 5.500 21 8v8q0 2.500-2.500 2.500h-14Q2 18.500 2 16v-3M21 10h2v4h-2z" /><path d="M5 1L1 9h3l-1 5 5-7H5z" fill="currentColor" strokeWidth=".8" /><path d="M5 15.500v.3" strokeWidth="2.500" /></Ico>
        <div className="ml-auto flex shrink-0 flex-col items-end pb-[3px] text-[17px] leading-6 text-[#222]">
          <Fit w={42}>19:30</Fit>
          <Fit w={92}>2023/06/15</Fit>
        </div>
        <div className="ml-[10px] mr-[30px] flex size-6 shrink-0 items-center justify-center rounded-full bg-[#0067c0] text-[14px] text-white">2</div>
      </div>
    </div>
  );
}
